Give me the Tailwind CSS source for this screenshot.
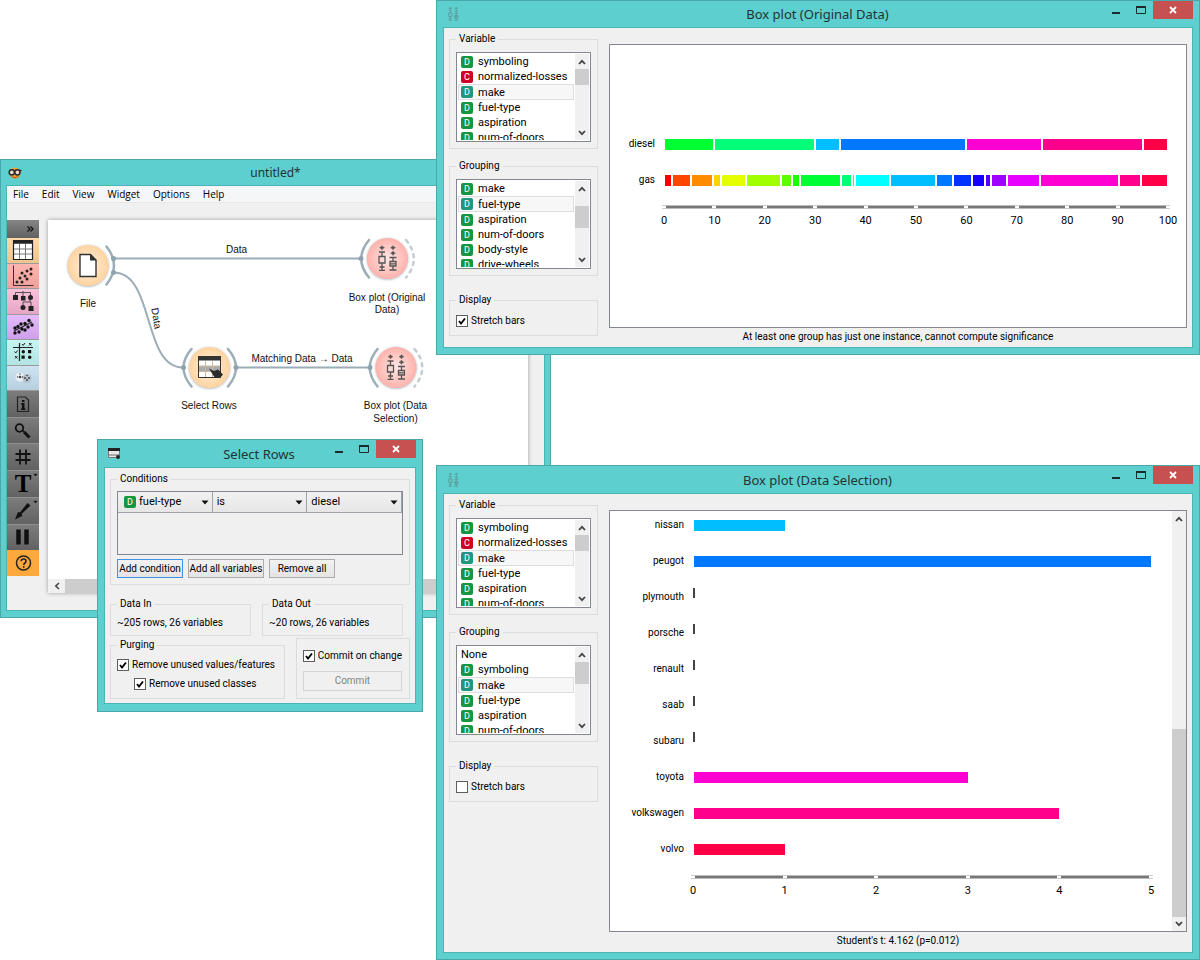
<!DOCTYPE html>
<html lang="en">
<head>
<meta charset="utf-8">
<title>Orange Canvas</title>
<script src="https://cdn.jsdelivr.net/npm/@tailwindcss/browser@4"></script>
</head>
<body class="bg-white">
<svg width="0" height="0" class="absolute">
  <defs>
    <symbol id="min" viewBox="0 0 10 10"><path d="M1 8h8" stroke="#1c2b2b" stroke-width="2"/></symbol>
    <symbol id="max" viewBox="0 0 10 10"><path d="M0.5 1.5h9v7h-9z" fill="none" stroke="#1c2b2b"/><path d="M0 2h10" stroke="#1c2b2b" stroke-width="2"/></symbol>
    <symbol id="close" viewBox="0 0 10 10"><path d="M2 2l6 6M8 2l-6 6" stroke="#fff" stroke-width="1.8"/></symbol>
    <symbol id="up" viewBox="0 0 8 8"><path d="M1 6l3-3.2L7 6" fill="none" stroke="#444" stroke-width="1.8"/></symbol>
    <symbol id="down" viewBox="0 0 8 8"><path d="M1 2l3 3.2L7 2" fill="none" stroke="#444" stroke-width="1.8"/></symbol>
    <symbol id="caret" viewBox="0 0 8 5"><path d="M0.5 0.5h7L4 4.5z" fill="#111"/></symbol>
    <symbol id="boxes" viewBox="0 0 20 26">
      <g fill="none" stroke="currentColor" stroke-width="1.3">
        <path d="M2 6.500h6M5 6.500v4.500M2 11h6v6.500H2zM5 17.500v7M2 24.800h6M2.500 21.500h5"/>
        <path d="M12.500 12h7M16 12v4M13 16h6v4.500H13zM16 20.500v4M12.500 24.500h7M13 18.300h6"/>
      </g>
      <g fill="currentColor"><path d="M5 0l.9 1.300L7.500 2.200l-1.600.9L5 4.500l-.9-1.400-1.600-.9 1.600-.9zM16 0l.9 1.300 1.600.9-1.600.9L16 4.500l-.9-1.400-1.600-.9 1.600-.9zM16 5.500l.9 1.300 1.600.9-1.600.9L16 10l-.9-1.400-1.600-.9 1.600-.9z" stroke="currentColor" stroke-width=".4"/></g>
    </symbol>
    <radialGradient id="gO"><stop offset="0" stop-color="#fff1e0"/><stop offset="1" stop-color="#ffd39f"/></radialGradient>
    <radialGradient id="gR"><stop offset="0" stop-color="#ffe6e4"/><stop offset="1" stop-color="#ffb2ac"/></radialGradient>
    <filter id="soft" x="-20%" y="-20%" width="140%" height="140%"><feDropShadow dx="0" dy="0.500" stdDeviation="1.200" flood-color="#7d98a8" flood-opacity="0.800"/></filter>
  </defs>
</svg>

<main class="relative min-h-screen overflow-hidden font-['Roboto',sans-serif] text-[10px] leading-[14px] text-black">

  <!-- Workflow canvas window -->
  <section class="absolute left-0 top-[159px] w-[551px] h-[459px] flex flex-col bg-[#5ccfce] border border-[#4aa9a8] px-[5px] pb-[6px]">
    <header class="h-[25px] shrink-0 flex items-center font-['Noto_Sans',sans-serif]">
      <svg class="w-[14px] h-[14px] ml-[2px]" viewBox="0 0 14 14"><circle cx="7" cy="7" r="5.600" fill="#f7a02b"/><path d="M3.500 10.500q3.500 2.500 7 0" stroke="#b5561a" fill="none"/><circle cx="3.800" cy="6.300" r="2.600" fill="#e9dcc8" stroke="#2a2a2a" stroke-width="1.500"/><circle cx="9.400" cy="6.300" r="2.600" fill="#e9dcc8" stroke="#2a2a2a" stroke-width="1.500"/><path d="M11.500 4.500h2" stroke="#2a2a2a" stroke-width="1.500"/></svg>
      <h1 class="flex-1 text-center text-[12px] text-[#1f3535] pr-[16px]">untitled*</h1>
    </header>
    <div class="flex-1 min-h-0 flex flex-col bg-[#f0f0f0] border border-[#4bb5b4]">
      <nav class="h-[17px] shrink-0 bg-[#f5f6f8] border-b border-[#e8e8e8] flex items-center gap-[13px] pl-[6px] font-['Open_Sans',sans-serif]">
        <a href="#">File</a><a href="#">Edit</a><a href="#">View</a><a href="#">Widget</a><a href="#">Options</a><a href="#">Help</a>
      </nav>
      <div class="flex-1 min-h-0 flex pt-[17px] pb-[17px]">
        <aside class="w-[32px] shrink-0 flex flex-col">
          <button aria-label="Collapse" class="h-[18px] shrink-0 bg-linear-to-b from-[#868686] to-[#616161] flex items-center justify-end pr-[5px]"><svg width="7" height="6" viewBox="0 0 7 6"><path d="M0.500 0.500L3 3 .5 5.500M3.500 0.500L6 3 3.500 5.500" fill="none" stroke="#111" stroke-width="1.200"/></svg></button>
          <div class="h-[153px] shrink-0 flex flex-col [&>button]:flex-1 [&>button]:min-h-0 [&>button]:flex [&>button]:items-center [&>button]:justify-center [&>button]:border-b [&>button]:border-[#9a9a9a]">
            <button aria-label="Data" class="bg-linear-to-b from-[#ffd8a5] to-[#eec48f]"><svg width="22" height="22" viewBox="0 0 22 22"><path d="M1.500 1.500h19v19h-19z" fill="#fff" stroke="#222" stroke-width="1.200"/><path d="M1 3h20" stroke="#222" stroke-width="3.500"/><path d="M7.500 5v15M13.500 5v15M2 10h18M2 15h18" stroke="#777"/></svg></button>
            <button aria-label="Visualize" class="bg-linear-to-b from-[#ffb6b0] to-[#efa19b]"><svg width="22" height="22" viewBox="0 0 22 22"><path d="M1.500 0.500v20h20" fill="none" stroke="#333"/><g fill="#222"><circle cx="5" cy="17" r="1.500"/><circle cx="8" cy="13" r="1.500"/><circle cx="10" cy="17" r="1.500"/><circle cx="10" cy="8" r="1.500"/><circle cx="13" cy="11" r="1.500"/><circle cx="15" cy="14" r="1.500"/><circle cx="15" cy="6" r="1.500"/><circle cx="19" cy="4" r="1.500"/><circle cx="19" cy="9" r="1.500"/></g></svg></button>
            <button aria-label="Classify" class="bg-linear-to-b from-[#fbc1db] to-[#e5a6c4]"><svg width="22" height="22" viewBox="0 0 22 22"><path d="M3.500 6V2.500h15V6M11 1v7M18 8v4M11 15v-3h8v4" fill="none" stroke="#444" stroke-width="0.900"/><g fill="#222"><path d="M1 5h5v5H1zM9 6h4.500v4.500H9zM16.500 16h5v5h-5z"/><circle cx="18.500" cy="7.500" r="2.500"/><circle cx="11" cy="17.500" r="2.500"/></g></svg></button>
            <button aria-label="Regression" class="bg-linear-to-b from-[#e3bcfa] to-[#cf9fec]"><svg width="22" height="22" viewBox="0 0 22 22"><path d="M2 15L20 6" stroke="#222" stroke-width="1.200"/><g fill="#111"><circle cx="3" cy="12" r="1.700"/><circle cx="3" cy="17" r="1.700"/><circle cx="7" cy="16" r="1.700"/><circle cx="6" cy="10.500" r="1.700"/><circle cx="9" cy="8" r="1.700"/><circle cx="10" cy="13" r="1.700"/><circle cx="13" cy="14" r="1.700"/><circle cx="13" cy="7.500" r="1.700"/><circle cx="16" cy="11" r="1.700"/><circle cx="17" cy="4.500" r="1.700"/><circle cx="20" cy="9" r="1.700"/></g></svg></button>
            <button aria-label="Evaluate" class="bg-linear-to-b from-[#c6f5f3] to-[#b2e4e3]"><svg width="22" height="22" viewBox="0 0 22 22"><path d="M7.500 2v18M1 6.500h20" stroke="#222" stroke-width="1.200"/><path d="M10 3l1.200 1.500L13 2M17 2l2.500 2.500M19.500 2L17 4.500M2.500 10.500l1.200 1.500L5.500 9.500M3 15l2.500 2.500M5.500 15L3 17.500" stroke="#222" fill="none"/><g fill="#111"><path d="M9.500 14.500h3.200v3.200H9.500zM16 9h3.200v3.200H16z"/><circle cx="11.300" cy="10.700" r="1.700"/><circle cx="17.700" cy="16.300" r="1.700"/></g></svg></button>
            <button aria-label="Unsupervised" class="bg-linear-to-b from-[#cfe3f0] to-[#b6cfdf]"><svg width="22" height="22" viewBox="0 0 22 22"><g fill="#e9eff3"><circle cx="8" cy="10" r="4.500"/><circle cx="15" cy="11.500" r="4.500" fill="#b3c3cd"/></g><g fill="#444"><circle cx="5.500" cy="10" r=".7"/><circle cx="8" cy="10" r="1.300"/><circle cx="8" cy="7" r=".7"/><circle cx="10.500" cy="10" r=".7"/><circle cx="13" cy="11" r="1"/><circle cx="15" cy="13" r="1"/><circle cx="17" cy="11" r="1"/><circle cx="15" cy="8.500" r=".8"/></g></svg></button>
          </div>
          <div class="h-[185px] shrink-0 flex flex-col [&>button]:flex-1 [&>button]:min-h-0 [&>button]:flex [&>button]:items-center [&>button]:justify-center">
            <button aria-label="Info" class="bg-linear-to-b from-[#7c7c7c] to-[#626262] border-b border-[#909090]"><svg width="20" height="20" viewBox="0 0 20 20"><path d="M4.500 3h8l3 3v11.500h-11z" fill="none" stroke="#222" stroke-width="1.200"/><path d="M9 6h2.500v2H9zM8 9h3.500v5.500h1V16H8v-1.500h1V10.500H8z" fill="#111"/></svg></button>
            <button aria-label="Zoom" class="bg-linear-to-b from-[#7c7c7c] to-[#626262] border-b border-[#909090]"><svg width="20" height="20" viewBox="0 0 20 20"><circle cx="6.500" cy="7" r="3.800" fill="none" stroke="#111" stroke-width="1.800"/><path d="M9.500 9.500l2 1.500" stroke="#111" stroke-width="1.500"/><path d="M11 11l5.500 5.500" stroke="#111" stroke-width="3"/></svg></button>
            <button aria-label="Grid" class="bg-linear-to-b from-[#7c7c7c] to-[#626262] border-b border-[#909090]"><svg width="20" height="20" viewBox="0 0 20 20"><path d="M7 2.500v15M13 2.500v15M2.500 7h15M2.500 13h15" stroke="#111" stroke-width="1.800"/></svg></button>
            <button aria-label="Text annotation" class="relative bg-linear-to-b from-[#7c7c7c] to-[#626262] border-b border-[#909090]"><span class="font-['Liberation_Serif',serif] font-bold text-[25px] leading-[26px]">T</span><svg class="absolute right-[1px] top-[2px]" width="5" height="4" viewBox="0 0 8 5"><use href="#caret"/></svg></button>
            <button aria-label="Arrow annotation" class="relative bg-linear-to-b from-[#7c7c7c] to-[#626262] border-b border-[#909090]"><svg width="20" height="20" viewBox="0 0 20 20"><path d="M14.500 2l3 2.500L8.500 13l1 1.800L2 18.500 5 11l2 .5z" fill="#111"/></svg><svg class="absolute right-[1px] top-[2px]" width="5" height="4" viewBox="0 0 8 5"><use href="#caret"/></svg></button>
            <button aria-label="Freeze" class="bg-linear-to-b from-[#7c7c7c] to-[#626262]"><svg width="20" height="20" viewBox="0 0 20 20"><path d="M5.500 2.500v15M13.500 2.500v15" stroke="#111" stroke-width="4.500"/></svg></button>
            <button aria-label="Help" class="bg-[#ffa83c]"><svg width="20" height="20" viewBox="0 0 20 20"><circle cx="10.500" cy="10" r="7" fill="none" stroke="#222" stroke-width="1.500"/><path d="M8.200 8.300c0-3 4.800-3 4.800 0 0 1.800-2.300 1.800-2.300 3.700M10.700 13v1.800" fill="none" stroke="#222" stroke-width="1.600"/></svg></button>
          </div>
        </aside>
        <div class="flex-1 min-w-0 ml-[9px] mr-[16px] flex flex-col bg-white shadow-[0_0_4px_#999]">
          <svg class="flex-1 min-h-0 w-full" font-family="Liberation Sans, sans-serif" font-size="10" fill="#111" text-anchor="middle">
           <g transform="translate(-48 -220)">
            <g fill="none" stroke="#9cadb7" stroke-width="2">
              <path d="M113.500 258.500H361M113.500 272.500C155 272.500 142 367.500 183 367.500M236 367.500H370"/>
            </g>
            <g fill="none" stroke="#9cadb7" stroke-width="2.500" stroke-linecap="round">
              <path d="M106.500 246.500Q121.500 265.500 106.500 284.500M369 240Q353.500 259 369 277.500M191.500 349Q175.500 367.500 191.500 386.500M228 349Q244 367.500 228 386.500M377.500 349Q362 367.500 377.500 386.500"/>
              <g stroke="#c2ccd2" stroke-dasharray="3 5"><path d="M406 240Q421.500 259 406 277.500M414.500 349Q430 367.500 414.500 386.500"/></g>
            </g>
            <g fill="#8fa2ad"><circle cx="113.500" cy="258.500" r="2.500"/><circle cx="113.500" cy="272.500" r="2.500"/><circle cx="361" cy="258.500" r="2.500"/><circle cx="183.500" cy="367.500" r="2.500"/><circle cx="236" cy="367.500" r="2.500"/><circle cx="370" cy="367.500" r="2.500"/></g>
            <g filter="url(#soft)"><circle cx="88" cy="265.500" r="20.500" fill="url(#gO)"/><circle cx="209.500" cy="367.500" r="20.500" fill="url(#gO)"/><circle cx="387.500" cy="258.500" r="20.500" fill="url(#gR)"/><circle cx="396" cy="367.500" r="20.500" fill="url(#gR)"/></g>
            <path d="M80 254.500h10.500l5.500 5.500v16.500H80z" fill="#fff" stroke="#333" stroke-width="1.400"/><path d="M90 254v6.500h6.500z" fill="#333"/>
            <path d="M198.500 356.500h22v21h-22z" fill="#fff" stroke="#333"/><path d="M198 356h23v4.500h-23z" fill="#333"/><path d="M199 366h21v5.500h-21z" fill="#aaa"/><path d="M205.500 361v16M212.500 361v16M199 366h21M199 371.500h21" stroke="#ccb9a3"/><path d="M209 368.500l5 2.500 4-1.500 5 5-3 3.500h-5l-2-3z" fill="#2b2b2b"/>
            <g color="#555"><use href="#boxes" x="377" y="245.500" width="20" height="26"/><use href="#boxes" x="385.500" y="354.500" width="20" height="26"/></g>
            <text x="236.500" y="253">Data</text>
            <text x="88" y="307">File</text>
            <text x="387" y="301">Box plot (Original</text><text x="387" y="313">Data)</text>
            <text x="209" y="409">Select Rows</text>
            <text x="302" y="362">Matching Data → Data</text>
            <text x="395.500" y="409">Box plot (Data</text><text x="395.500" y="422">Selection)</text>
            <text transform="translate(153 319) rotate(80)">Data</text>
           </g>
          </svg>
          <div class="h-[14px] shrink-0 flex bg-[#f0f0f0]"><button aria-label="Scroll left" class="w-[17px] flex items-center justify-center"><svg width="8" height="8" viewBox="0 0 8 8"><path d="M6 1L2.800 4 6 7" fill="none" stroke="#444" stroke-width="1.600"/></svg></button><div class="flex-1 bg-[#cdcdcd] mr-[17px]"></div></div>
        </div>
      </div>
    </div>
  </section>

  <!-- Select Rows dialog -->
  <section class="absolute left-[97px] top-[439px] w-[326px] h-[273px] flex flex-col bg-[#5ccfce] border border-[#4aa9a8] px-[6px] pb-[7px]">
    <header class="h-[27px] shrink-0 flex items-center font-['Noto_Sans',sans-serif]">
      <svg class="ml-[4px]" width="12" height="11" viewBox="0 0 12 11"><path d="M0.500 0.500h11v9h-11z" fill="#e8e8e8" stroke="#777"/><path d="M0 0h12v3H0z" fill="#222"/><path d="M1 6h10v2H1z" fill="#aaa"/><circle cx="10" cy="9" r="1.900" fill="#222"/></svg>
      <h2 class="flex-1 text-center text-[13px] text-[#1f3535] pl-[71px]">Select Rows</h2>
      <div class="flex self-start [&>button]:h-[18px] [&>button]:flex [&>button]:items-center [&>button]:justify-center">
        <button aria-label="Minimize" class="w-[24px]"><svg width="10" height="10"><use href="#min"/></svg></button><button aria-label="Maximize" class="w-[25px]"><svg width="10" height="10"><use href="#max"/></svg></button><button aria-label="Close" class="w-[40px] bg-[#c75050]"><svg width="10" height="10"><use href="#close"/></svg></button>
      </div>
    </header>
    <div class="flex-1 min-h-0 bg-[#f0f0f0] border border-[#4bb5b4] px-[5px] pt-[4px] flex flex-col">
      <fieldset class="border border-[#dcdcdc] px-[6px] pb-[6px]">
        <legend class="px-[3px]">Conditions</legend>
        <div class="mt-[5px] h-[64px] border border-[#828790]">
          <div class="flex h-[21px] [&_select]:appearance-none [&_select]:w-full [&_select]:h-full [&_select]:border-r [&_select]:border-b [&_select]:border-[#a0a4aa] [&_select]:bg-linear-to-b [&_select]:from-[#f2f2f2] [&_select]:to-[#e6e6e6] [&_select]:text-[11px] [&_svg]:absolute [&_svg]:right-[4px] [&_svg]:top-[8px]">
            <div class="relative flex-1"><select aria-label="Variable" class="pl-[21px]"><option>fuel-type</option></select><span class="absolute left-[6px] top-[4px] w-[12px] h-[12px] rounded-[2px] bg-[#179642] text-white text-[9px] leading-[12px] text-center">D</span><svg width="8" height="5"><use href="#caret"/></svg></div>
            <div class="relative flex-1"><select aria-label="Operator" class="pl-[4px]"><option>is</option></select><svg width="8" height="5"><use href="#caret"/></svg></div>
            <div class="relative flex-1"><select aria-label="Value" class="pl-[4px]"><option>diesel</option></select><svg width="8" height="5"><use href="#caret"/></svg></div>
          </div>
        </div>
        <div class="flex gap-[5px] mt-[4px] [&>button]:h-[19px] [&>button]:border [&>button]:bg-linear-to-b [&>button]:from-[#f2f2f2] [&>button]:to-[#e4e4e4] [&>button]:whitespace-nowrap">
          <button class="w-[66px] border-[#3c93e8]">Add condition</button><button class="w-[76px] border-[#acacac]">Add all variables</button><button class="w-[66px] border-[#acacac]">Remove all</button>
        </div>
      </fieldset>
      <div class="flex gap-[11px] mt-[12px] pr-[7px]">
        <fieldset class="flex-1 border border-[#dcdcdc] px-[6px] pb-[5px]"><legend class="px-[3px]">Data In</legend><p class="mt-[5px]">~205 rows, 26 variables</p></fieldset>
        <fieldset class="flex-1 border border-[#dcdcdc] px-[6px] pb-[5px]"><legend class="px-[3px]">Data Out</legend><p class="mt-[5px]">~20 rows, 26 variables</p></fieldset>
      </div>
      <div class="flex gap-[11px] mt-[2px] items-end">
        <fieldset class="w-[175px] min-w-0 border border-[#dcdcdc] px-[6px] pb-[7px]"><legend class="px-[3px]">Purging</legend>
          <label class="mt-[6px] flex items-center gap-[3px] whitespace-nowrap"><input type="checkbox" checked class="tick"><span>Remove unused values/features</span></label>
          <label class="mt-[5px] ml-[17px] flex items-center gap-[3px] whitespace-nowrap"><input type="checkbox" checked class="tick"><span>Remove unused classes</span></label>
        </fieldset>
        <div class="flex-1 border border-[#dcdcdc] p-[7px] pt-[10px] pl-[6px]">
          <label class="flex items-center gap-[3px] whitespace-nowrap"><input type="checkbox" checked class="tick"><span>Commit on change</span></label>
          <button disabled class="mt-[8px] w-full h-[20px] border border-[#d4d4d4] text-[#838383]">Commit</button>
        </div>
      </div>
    </div>
  </section>

  <!-- Box plot windows -->
  <section data-window="original" class="absolute left-[436px] right-0 top-0 h-[355px] flex flex-col bg-[#5ccfce] border border-[#4aa9a8] px-[6px] pb-[6px]">
    <header class="h-[26px] shrink-0 flex items-center font-['Noto_Sans',sans-serif]">
      <svg class="ml-[4px] text-[#5d8f8f]" width="12" height="14"><use href="#boxes"/></svg>
      <h2 class="flex-1 text-center text-[13px] text-[#1f3535] pl-[72px]">Box plot (Original Data)</h2>
      <div class="flex self-start [&>button]:h-[18px] [&>button]:flex [&>button]:items-center [&>button]:justify-center">
        <button aria-label="Minimize" class="w-[24px]"><svg width="10" height="10"><use href="#min"/></svg></button><button aria-label="Maximize" class="w-[25px]"><svg width="10" height="10"><use href="#max"/></svg></button><button aria-label="Close" class="w-[40px] bg-[#c75050]"><svg width="10" height="10"><use href="#close"/></svg></button>
      </div>
    </header>
    <div class="flex-1 min-h-0 bg-[#f0f0f0] border border-[#4bb5b4] flex gap-[11px] pl-[5px] pr-[5px] pt-[4px]">
      <div class="w-[149px] shrink-0 flex flex-col gap-[10px]">
        <fieldset class="border border-[#dcdcdc] px-[6px] pb-[6px]"><legend class="px-[3px]">Variable</legend><div class="list" data-list="symboling,normalized-losses,*make,fuel-type,aspiration,num-of-doors" data-thumb="16" data-before="0"></div></fieldset>
        <fieldset class="border border-[#dcdcdc] px-[6px] pb-[6px]"><legend class="px-[3px]">Grouping</legend><div class="list" data-list="make,*fuel-type,aspiration,num-of-doors,body-style,drive-wheels" data-thumb="22" data-before="10"></div></fieldset>
        <fieldset class="mt-[7px] border border-[#dcdcdc] px-[6px] pb-[7px]"><legend class="px-[3px]">Display</legend><label class="mt-[7px] flex items-center gap-[3px]"><input type="checkbox" checked class="tick"><span>Stretch bars</span></label></fieldset>
      </div>
      <div class="flex-1 min-w-0 flex flex-col pt-[12px]">
        <div class="h-[284px] bg-white border border-[#828790] pt-[81px] pr-[18px]">
          <div class="h-[36px] flex items-center"><span class="w-[45px] text-right">diesel</span><div class="flex-1 ml-[9px] h-[11px] flex" data-stack="0,0,0,0,0,0,0,0,2,4,0,0,1,5,0,0,0,0,0,3,4,1"></div></div>
          <div class="h-[36px] flex items-center"><span class="w-[45px] text-right">gas</span><div class="flex-1 ml-[9px] h-[11px] flex" data-stack="3,7,8,3,9,13,4,3,15,4,1,13,17,6,7,5,2,6,12,29,8,10"></div></div>
          <div class="ml-[54px] mt-[7px]" data-axis="0,10,20,30,40,50,60,70,80,90,100"></div>
        </div>
        <p class="flex-1 flex items-center justify-center pb-[2px]">At least one group has just one instance, cannot compute significance</p>
      </div>
    </div>
  </section>

  <section data-window="selection" class="absolute left-[436px] right-0 top-[465px] h-[495px] flex flex-col bg-[#5ccfce] border border-[#4aa9a8] px-[6px] pb-[6px]">
    <header class="h-[27px] shrink-0 flex items-center font-['Noto_Sans',sans-serif]">
      <svg class="ml-[4px] text-[#5d8f8f]" width="12" height="14"><use href="#boxes"/></svg>
      <h2 class="flex-1 text-center text-[13px] text-[#1f3535] pl-[72px]">Box plot (Data Selection)</h2>
      <div class="flex self-start [&>button]:h-[18px] [&>button]:flex [&>button]:items-center [&>button]:justify-center">
        <button aria-label="Minimize" class="w-[24px]"><svg width="10" height="10"><use href="#min"/></svg></button><button aria-label="Maximize" class="w-[25px]"><svg width="10" height="10"><use href="#max"/></svg></button><button aria-label="Close" class="w-[40px] bg-[#c75050]"><svg width="10" height="10"><use href="#close"/></svg></button>
      </div>
    </header>
    <div class="flex-1 min-h-0 bg-[#f0f0f0] border border-[#4bb5b4] flex gap-[11px] pl-[5px] pr-[5px] pt-[4px]">
      <div class="w-[149px] shrink-0 flex flex-col gap-[10px]">
        <fieldset class="border border-[#dcdcdc] px-[6px] pb-[6px]"><legend class="px-[3px]">Variable</legend><div class="list" data-list="symboling,normalized-losses,*make,fuel-type,aspiration,num-of-doors" data-thumb="16" data-before="0"></div></fieldset>
        <fieldset class="border border-[#dcdcdc] px-[6px] pb-[6px]"><legend class="px-[3px]">Grouping</legend><div class="list" data-list="None,symboling,*make,fuel-type,aspiration,num-of-doors" data-thumb="22" data-before="0"></div></fieldset>
        <fieldset class="mt-[7px] border border-[#dcdcdc] px-[6px] pb-[7px]"><legend class="px-[3px]">Display</legend><label class="mt-[7px] flex items-center gap-[3px]"><input type="checkbox" class="tick"><span>Stretch bars</span></label></fieldset>
      </div>
      <div class="flex-1 min-w-0 flex flex-col pt-[12px]">
        <div class="h-[422px] bg-white border border-[#828790] flex overflow-hidden">
          <div class="flex-1 min-w-0 flex flex-col justify-end pr-[21px] pb-[33px]">
            <div data-bars="nissan:1:12,peugot:5:13,plymouth:0:14,porsche:0:15,renault:0:16,saab:0:17,subaru:0:18,toyota:3:19,volkswagen:4:20,volvo:1:21"></div>
            <div class="ml-[83px] mt-[8px]" data-axis="0,1,2,3,4,5"></div>
          </div>
          <div class="w-[14px] bg-[#f0f0f0] flex flex-col">
            <button aria-label="Scroll up" class="h-[16px] shrink-0 flex items-center justify-center"><svg width="8" height="8"><use href="#up"/></svg></button>
            <div class="flex-1"></div>
            <div class="h-[188px] bg-[#cdcdcd]"></div>
            <button aria-label="Scroll down" class="h-[14px] shrink-0 flex items-center justify-center"><svg width="8" height="8"><use href="#down"/></svg></button>
          </div>
        </div>
        <p class="flex-1 flex items-center justify-center pb-[2px]">Student's t: 4.162 (p=0.012)</p>
      </div>
    </div>
  </section>
</main>

<script>
  const colors = ['#ff0000','#ff4600','#ff8c00','#ffd200','#e6ff00','#a0ff00','#5aff00','#14ff00','#00ff32','#00ff78','#00ffbe','#00ffff','#00beff','#0078ff','#0032ff','#1400ff','#5a00ff','#a000ff','#e600ff','#ff00d2','#ff008c','#ff0046'];

  // Tick boxes: native inputs with a drawn check mark
  document.querySelectorAll('.tick').forEach(box => {
    box.className = 'peer appearance-none w-[12px] h-[12px] shrink-0 border border-[#5f5f5f] bg-white';
    const wrap = document.createElement('span');
    wrap.className = 'relative w-[12px] h-[12px] shrink-0 flex';
    box.replaceWith(wrap);
    wrap.append(box);
    wrap.insertAdjacentHTML('beforeend', '<svg class="absolute left-[2px] top-[2px] hidden peer-checked:block pointer-events-none" width="8" height="8" viewBox="0 0 8 8"><path d="M1 4l2 2.500L7 1.500" fill="none" stroke="#000" stroke-width="1.900"/></svg>');
  });

  // Variable lists
  document.querySelectorAll('[data-list]').forEach(el => {
    el.className = 'mt-[6px] h-[90px] border border-[#828790] bg-white flex p-px';
    const rows = el.dataset.list.split(',').map(raw => {
      const on = raw[0] === '*', name = raw.replace('*', '');
      const letter = name === 'normalized-losses' ? 'C' : 'D';
      const bg = letter === 'C' ? 'bg-[#cf0325]' : on ? 'bg-[#22967c]' : 'bg-[#179642]';
      const icon = name === 'None' ? '' : `<span class="w-[12px] h-[12px] mr-[5px] rounded-[2px] text-white text-[9px] leading-[12px] text-center ${bg}">${letter}</span>`;
      return `<li role="option" aria-selected="${on}" class="${on ? 'h-[16px] bg-[#f7f7f7] border-[#dedede]' : 'h-[15px] border-transparent'} shrink-0 flex items-center pl-[2px] border text-[11px] leading-[13px] whitespace-nowrap">${icon}${name}</li>`;
    }).join('');
    el.innerHTML = `<ul role="listbox" class="flex-1 min-w-0 flex flex-col overflow-hidden">${rows}</ul>
      <div class="w-[14px] shrink-0 ml-px bg-[#f0f0f0] flex flex-col">
        <button aria-label="Scroll up" class="h-[15px] shrink-0 flex items-center justify-center"><svg width="8" height="8"><use href="#up"/></svg></button>
        <div style="height:${el.dataset.before}px"></div>
        <div class="bg-[#cdcdcd]" style="height:${el.dataset.thumb}px"></div>
        <div class="flex-1"></div>
        <button aria-label="Scroll down" class="h-[15px] shrink-0 flex items-center justify-center"><svg width="8" height="8"><use href="#down"/></svg></button>
      </div>`;
  });

  // Stacked bars, each segment in proportion to its count
  document.querySelectorAll('[data-stack]').forEach(el => {
    const counts = el.dataset.stack.split(',').map(Number);
    const total = counts.reduce((a, b) => a + b, 0);
    el.innerHTML = counts.map((n, i) => n ? `<div class="border-x border-white" style="width:${n / total * 100}%;background:${colors[i]}"></div>` : '').join('');
  });

  // Plain bars on a 0 to 5 scale
  document.querySelectorAll('[data-bars]').forEach(el => {
    el.innerHTML = el.dataset.bars.split(',').map(item => {
      const [name, n, c] = item.split(':');
      const bar = +n ? `<div class="h-[11px] border-l border-white" style="width:${n / 5 * 100}%;background:${colors[c]}"></div>` : '<div class="w-[2px] h-[10px] mb-[8px] bg-[#444]"></div>';
      return `<div class="h-[36px] flex items-center"><span class="w-[74px] text-right">${name}</span><div class="flex-1 ml-[9px] flex items-center">${bar}</div></div>`;
    }).join('');
  });

  // Axes
  document.querySelectorAll('[data-axis]').forEach(el => {
    const marks = el.dataset.axis.split(',');
    const last = marks.length - 1;
    const seg = '<div class="flex-1 h-[4px] border-y border-[#bbb] bg-[#777]"></div>';
    const tick = '<div class="w-[4px] -mx-[2px] h-[4px] border-y border-[#ccc] bg-white z-10"></div>';
    el.innerHTML = `<div class="flex">${tick}${marks.slice(1).map(() => seg + tick).join('')}</div>
      <div class="relative h-[14px] mt-[5px] text-[11px]">${marks.map((m, i) => `<span class="absolute -translate-x-1/2" style="left:${i / last * 100}%">${m}</span>`).join('')}</div>`;
  });
</script>
</body>
</html>
